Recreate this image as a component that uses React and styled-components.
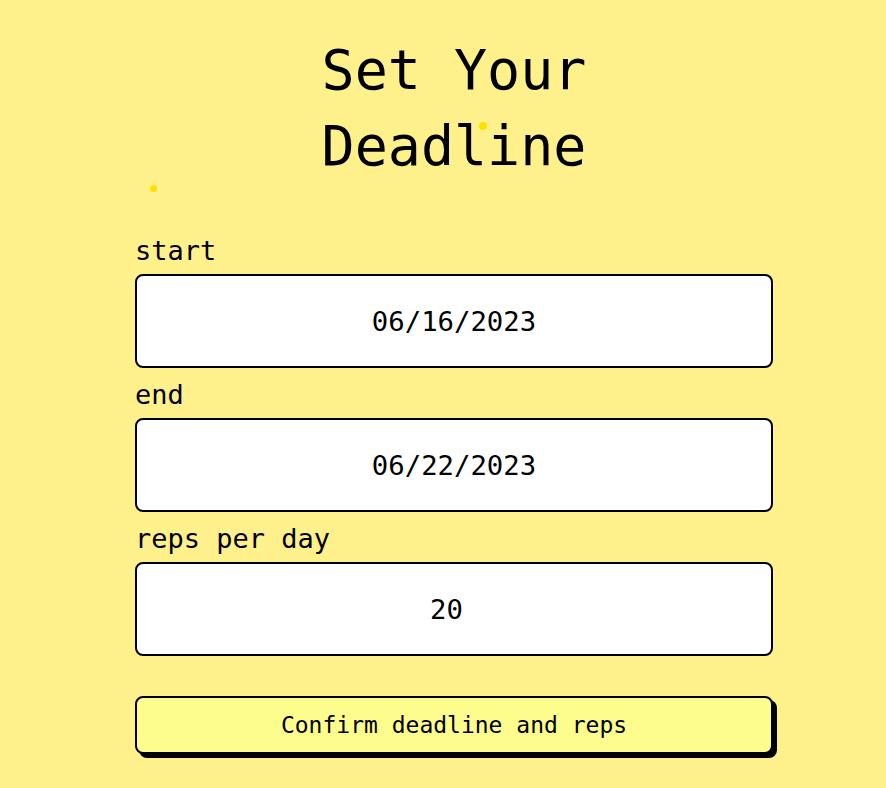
import React from 'react'
import styled, { createGlobalStyle } from 'styled-components'

const GlobalStyle = createGlobalStyle`
    html, body {
        margin: 0;
        padding: 0;
        background-color: #fef08a;
    }
    body {
        font-family: "DejaVu Sans Mono", monospace;
        color: #000;
    }
`

function App() {
    return (
        <>
            <GlobalStyle />
            <Page>
                <Dot size={8} style={{ left: 479, top: 122 }} />
                <Dot size={7} style={{ left: 150, top: 185 }} />
                <Form onSubmit={(e) => e.preventDefault()}>
                    <Title>Set Your<br />Deadline</Title>

                    <Label htmlFor="start">start</Label>
                    <Field id="start" type="text" defaultValue="06/16/2023" />

                    <Label htmlFor="end">end</Label>
                    <Field id="end" type="text" defaultValue="06/22/2023" />

                    <Label htmlFor="reps">reps per day</Label>
                    <Field id="reps" type="number" defaultValue="20" />

                    <ConfirmButton type="submit">Confirm deadline and reps</ConfirmButton>
                </Form>
            </Page>
        </>
    )
}

export default App

const Page = styled.div`
    position: relative;
    min-height: 788px;
    display: flex;
    justify-content: center;
    padding-left: 22px;
    box-sizing: border-box;
`

const Dot = styled.span`
    position: absolute;
    width: ${(p) => p.size}px;
    height: ${(p) => p.size}px;
    border-radius: 50%;
    background-color: #fde000;
`

const Form = styled.form`
    width: 638px;
    display: flex;
    flex-direction: column;
    padding-top: 32px;
`

const Title = styled.h1`
    margin: 0 0 50px;
    font-size: 55px;
    line-height: 76px;
    font-weight: 400;
    text-align: center;
`

const Label = styled.label`
    font-size: 27px;
    line-height: 33px;
    margin: 10px 0 7px;
    &:first-of-type {
        margin-top: 0;
    }
`

const Field = styled.input`
    box-sizing: border-box;
    width: 100%;
    height: 94px;
    border: 2px solid #000;
    border-radius: 8px;
    background: #fff;
    font-family: "DejaVu Sans Mono", monospace;
    font-size: 27.3px;
    text-align: center;
    color: #000;
    padding: 0 16px;
    outline: none;
`

const ConfirmButton = styled.button`
    margin-top: 40px;
    height: 58px;
    width: 100%;
    border: 2px solid #000;
    border-radius: 8px;
    background-color: #fdfd8e;
    box-shadow: 4px 4px 0 #000;
    font-family: "DejaVu Sans Mono", monospace;
    font-size: 23px;
    color: #000;
    cursor: pointer;
`
